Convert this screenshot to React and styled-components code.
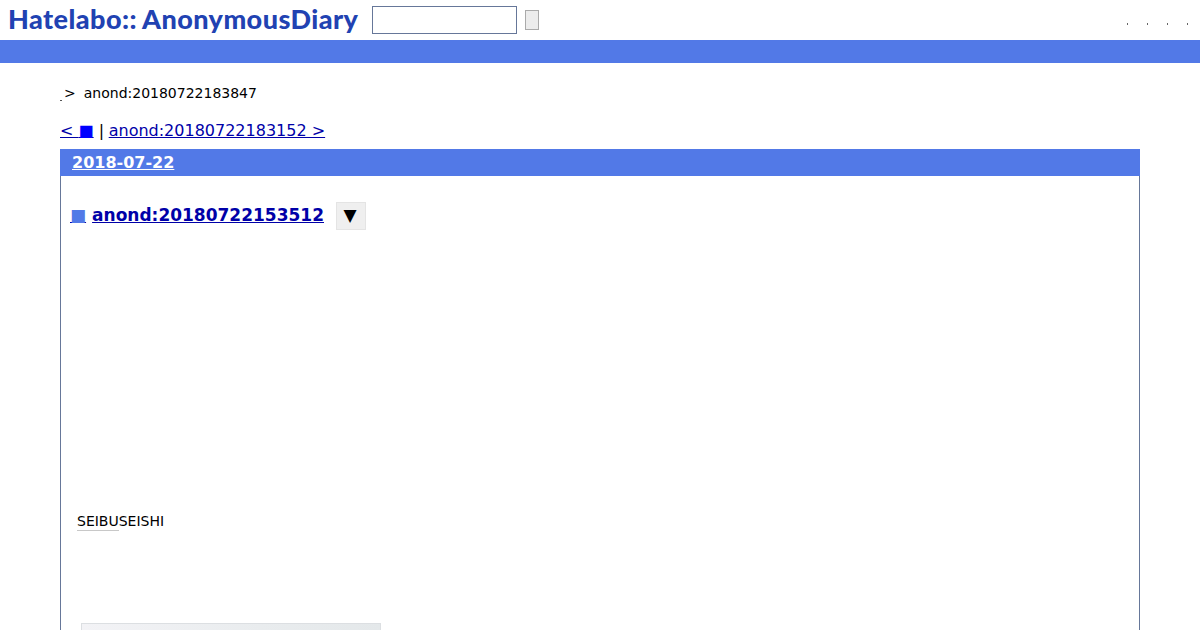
import React from 'react'
import styled, { createGlobalStyle } from 'styled-components'

const GlobalStyle = createGlobalStyle`
  html, body {
    margin: 0;
    padding: 0;
    height: 630px;
    overflow: hidden;
    background: #fff;
    font-family: "DejaVu Sans", sans-serif;
    color: #000;
  }
`

const Header = styled.header`
  height: 40px;
  display: flex;
  align-items: flex-start;
  padding-left: 8px;
`

const Logo = styled.a`
  font-family: Lato, "Liberation Sans", sans-serif;
  font-weight: 900;
  font-size: 27px;
  line-height: 38px;
  letter-spacing: 0.45px;
  color: #2142b2;
  white-space: nowrap;
  width: 364px;
`

const LogoWord = styled.span`
  margin-left: 5px;
`

const SearchInput = styled.input`
  box-sizing: border-box;
  width: 145px;
  height: 28px;
  margin-top: 6px;
  border: 1px solid #667799;
  background: #fff;
  padding: 0;
`

const SearchButton = styled.button`
  box-sizing: border-box;
  width: 14px;
  height: 20px;
  margin: 10px 0 0 8px;
  border: 1px solid #aaa;
  border-radius: 0;
  background: #ececec;
  padding: 0;
`

const HeaderLinks = styled.div`
  margin-left: auto;
  display: flex;
  gap: 19px;
  padding: 23px 12px 0 0;
`

const Dot = styled.span`
  width: 1px;
  height: 2px;
  background: #666;
`

const BlueBar = styled.div`
  height: 23px;
  background: #5279e7;
`

const Main = styled.main`
  padding: 0 60px;
`

const Crumbs = styled.div`
  display: flex;
  align-items: baseline;
  padding-top: 22px;
  font-size: 14px;
  line-height: 16px;
  height: 16px;
`

const CrumbDot = styled.span`
  width: 2px;
  height: 1px;
  margin-right: 2px;
  background: #555;
  align-self: flex-end;
`

const CrumbArrow = styled.span`
  margin-right: 8px;
`

const Pager = styled.div`
  margin-top: 20px;
  font-size: 16px;
  line-height: 19px;
  height: 19px;
  white-space: pre;
`

const PagerLink = styled.a`
  color: #0000a8;
  text-decoration: underline;
  cursor: pointer;
`

const NextLink = styled(PagerLink)`
  margin-left: -0.5px;
`

const Square = styled.span`
  color: ${(p) => p.$color};
`

const Day = styled.section`
  box-sizing: border-box;
  margin-top: 9px;
  height: 600px;
  border: 1px solid #667799;
  border-top: none;
`

const DayTitle = styled.h2`
  margin: 0 -1px;
  height: 27px;
  padding-left: 12px;
  background: #5279e7;
  font-size: 16px;
  font-weight: 700;
  line-height: 27px;

  a {
    color: #fff;
    text-decoration: underline;
  }
`

const SectionTitle = styled.h3`
  margin: 26px 0 0 9px;
  height: 28px;
  display: flex;
  align-items: center;
  font-size: 17px;
  font-weight: 700;
  line-height: 24px;
`

const TitleLink = styled.a`
  color: #0000a8;
  text-decoration: underline;
  white-space: pre;
  margin-top: -3px;
`

const Bullet = styled(TitleLink)`
  margin-right: 6px;
`

const MenuButton = styled.button`
  box-sizing: border-box;
  width: 30px;
  height: 28px;
  margin-left: 12px;
  border: 1px solid #e4e4e4;
  background: #efefef;
  color: #000;
  font-family: "DejaVu Sans", sans-serif;
  font-size: 17px;
  padding: 0 2px 3px 0;
`

const Body = styled.div`
  padding: 283px 0 0 16px;
  font-size: 14px;
  line-height: 17px;
`

const Label = styled.span`
  display: inline-block;
  padding-bottom: 1px;
  background: linear-gradient(#c8c8c8, #c8c8c8) no-repeat 0 100% / 42px 1px;
`

const Photo = styled.div`
  box-sizing: border-box;
  width: 300px;
  height: 60px;
  margin: 92px 0 0 4px;
  border: 1px solid #dcdfe2;
  background: linear-gradient(90deg, #f3f3f6 0%, #e9ecee 60%, #e4e8ea 100%);
`

export default function App() {
  return (
    <>
      <GlobalStyle />
      <Header>
        <Logo>
          Hatelabo::<LogoWord>AnonymousDiary</LogoWord>
        </Logo>
        <SearchInput type="text" />
        <SearchButton type="button" />
        <HeaderLinks>
          <Dot />
          <Dot />
          <Dot />
          <Dot />
        </HeaderLinks>
      </Header>
      <BlueBar />
      <Main>
        <Crumbs>
          <CrumbDot />
          <CrumbArrow>&gt;</CrumbArrow>
          <span>anond:20180722183847</span>
        </Crumbs>
        <Pager>
          <PagerLink>
            {'< '}
            <Square $color="#0000ff">■</Square>
          </PagerLink>
          {' | '}
          <NextLink>anond:20180722183152 &gt;</NextLink>
        </Pager>
        <Day>
          <DayTitle>
            <a>2018-07-22</a>
          </DayTitle>
          <SectionTitle>
            <Bullet>
              <Square $color="#5279e7">■</Square>
            </Bullet>
            <TitleLink>anond:20180722153512</TitleLink>
            <MenuButton type="button">▼</MenuButton>
          </SectionTitle>
          <Body>
            <Label>SEIBUSEISHI</Label>
            <Photo />
          </Body>
        </Day>
      </Main>
    </>
  )
}
